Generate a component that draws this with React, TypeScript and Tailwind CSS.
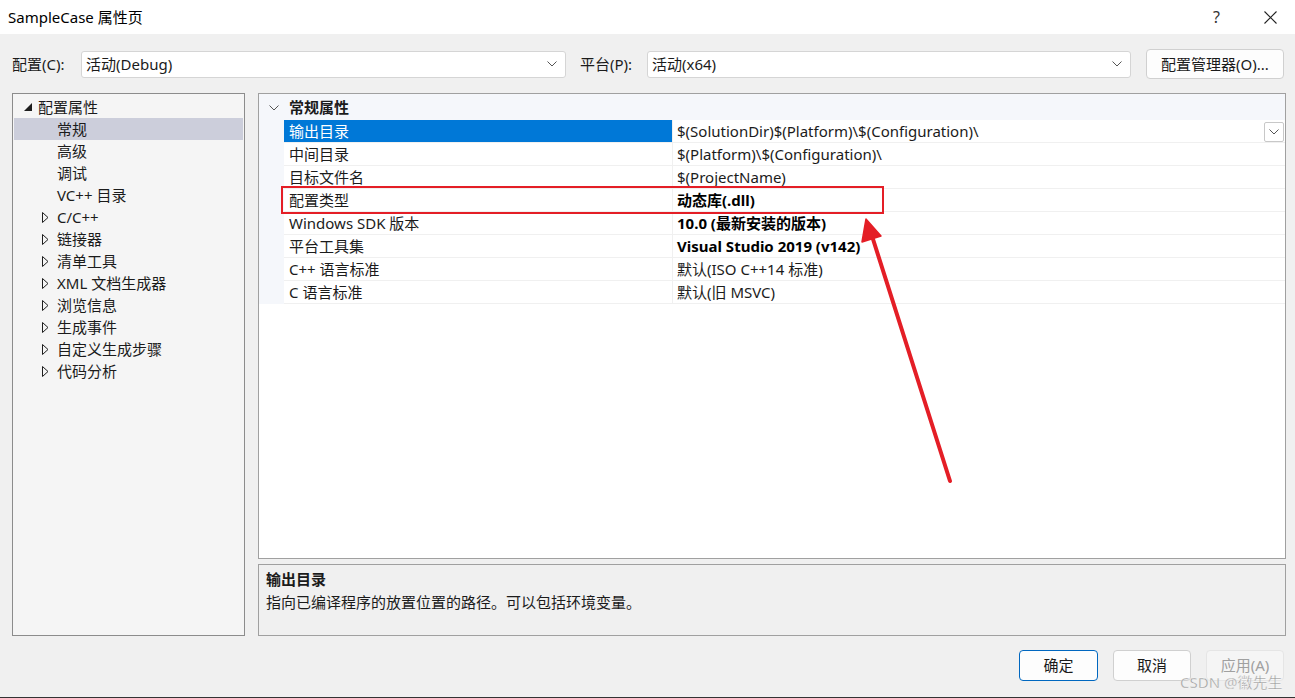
import React from 'react';

const font = { fontFamily: '"Segoe UI", "Noto Sans", "Noto Sans CJK SC", sans-serif' };

const treeItems: { label: string; level: 0 | 1; arrow?: 'open' | 'closed'; selected?: boolean }[] = [
  { label: '配置属性', level: 0, arrow: 'open' },
  { label: '常规', level: 1, selected: true },
  { label: '高级', level: 1 },
  { label: '调试', level: 1 },
  { label: 'VC++ 目录', level: 1 },
  { label: 'C/C++', level: 1, arrow: 'closed' },
  { label: '链接器', level: 1, arrow: 'closed' },
  { label: '清单工具', level: 1, arrow: 'closed' },
  { label: 'XML 文档生成器', level: 1, arrow: 'closed' },
  { label: '浏览信息', level: 1, arrow: 'closed' },
  { label: '生成事件', level: 1, arrow: 'closed' },
  { label: '自定义生成步骤', level: 1, arrow: 'closed' },
  { label: '代码分析', level: 1, arrow: 'closed' },
];

const props: { name: string; value: string; bold?: boolean }[] = [
  { name: '输出目录', value: '$(SolutionDir)$(Platform)\\$(Configuration)\\' },
  { name: '中间目录', value: '$(Platform)\\$(Configuration)\\' },
  { name: '目标文件名', value: '$(ProjectName)' },
  { name: '配置类型', value: '动态库(.dll)', bold: true },
  { name: 'Windows SDK 版本', value: '10.0 (最新安装的版本)', bold: true },
  { name: '平台工具集', value: 'Visual Studio 2019 (v142)', bold: true },
  { name: 'C++ 语言标准', value: '默认(ISO C++14 标准)' },
  { name: 'C 语言标准', value: '默认(旧 MSVC)' },
];

const Chevron: React.FC<{ className?: string }> = ({ className }) => (
  <svg width="10" height="6" viewBox="0 0 10 6" className={className}>
    <path d="M0.5 0.5 L5 5 L9.5 0.5" fill="none" stroke="#555" strokeWidth="1" />
  </svg>
);

const Dropdown: React.FC<{ value: string; width: string }> = ({ value, width }) => (
  <div className={`${width} h-[27px] bg-white border border-[#d5d5d5] rounded-[3px] flex items-center justify-between pl-[4px] pr-[8px]`}>
    <span>{value}</span>
    <Chevron />
  </div>
);

const App: React.FC = () => {
  return (
    <div className="relative w-[1295px] h-[698px] flex flex-col text-[15px] text-[#1b1b1b] border-b border-[#333]" style={font}>
      {/* title bar */}
      <div className="h-[34px] bg-white flex items-center justify-between pl-[8px] pr-[18px]">
        <span className="text-[15px] text-black">SampleCase 属性页</span>
        <div className="flex items-center gap-[44px]">
          <span className="text-[16px] text-[#333]">?</span>
          <svg width="13" height="13" viewBox="0 0 13 13">
            <path d="M0.5 0.5 L12.5 12.5 M12.5 0.5 L0.5 12.5" stroke="#222" strokeWidth="1.1" />
          </svg>
        </div>
      </div>

      <div className="flex-1 bg-[#f0f0f0] flex flex-col">
        {/* config row */}
        <div className="flex items-center pl-[12px] mt-[14px] h-[31px] pt-[1px]">
          <span className="w-[69px]">配置(C):</span>
          <Dropdown value="活动(Debug)" width="w-[485px]" />
          <span className="ml-[14px] w-[67px]">平台(P):</span>
          <Dropdown value="活动(x64)" width="w-[484px]" />
          <button className="ml-[15px] w-[138px] h-[30px] bg-[#fdfdfd] border border-[#d0d0d0] rounded-[4px] text-[15px]">
            配置管理器(O)...
          </button>
        </div>

        {/* main area */}
        <div className="flex mt-[14px] pl-[12px] gap-[13px] h-[543px]">
          {/* tree */}
          <div className="w-[233px] h-full border border-[#8c8c8c] bg-[#f5f5f5] pt-[2px] px-[1px]">
            {treeItems.map((it) => (
              <div
                key={it.label}
                className={`h-[22px] flex items-center ${it.selected ? 'bg-[#cccedb]' : ''}`}
              >
                {it.level === 0 ? (
                  <div className="w-[24px] flex justify-end pr-[6px]">
                    <svg width="8" height="8" viewBox="0 0 8 8">
                      <path d="M8 0 L8 8 L0 8 Z" fill="#1e1e1e" />
                    </svg>
                  </div>
                ) : (
                  <div className="w-[43px] flex justify-end pr-[8px]">
                    {it.arrow === 'closed' && (
                      <svg width="7" height="11" viewBox="0 0 7 11">
                        <path d="M0.5 0.5 L6 5.5 L0.5 10.5 Z" fill="none" stroke="#1e1e1e" strokeWidth="1" />
                      </svg>
                    )}
                  </div>
                )}
                <span>{it.label}</span>
              </div>
            ))}
          </div>

          {/* right side */}
          <div className="w-[1028px] flex flex-col gap-[5px]">
            <div className="h-[466px] border border-[#a0a0a0] bg-white flex flex-col">
              <div className="h-[26px] bg-[#f5f7fb] flex items-center pt-[1px]">
                <div className="w-[30px] flex justify-center">
                  <Chevron />
                </div>
                <span className="font-bold">常规属性</span>
              </div>
              {props.map((p, i) => (
                <div key={p.name} className="h-[23px] flex">
                  <div className="w-[25px] bg-[#f5f7fb]" />
                  <div
                    className={`w-[388px] flex items-center pl-[5px] pt-[1px] border-b border-[#f0f0f0] ${
                      i === 0 ? 'bg-[#0078d7] text-white' : ''
                    }`}
                  >
                    {p.name}
                  </div>
                  <div className="flex-1 flex items-center justify-between pl-[4px] pr-[1px] pt-[1px] border-b border-l border-[#f0f0f0]">
                    <span className={p.bold ? 'font-bold text-black' : ''}>{p.value}</span>
                    {i === 0 && (
                      <div className="w-[20px] h-[20px] border border-[#c8c8c8] rounded-[2px] flex items-center justify-center">
                        <Chevron />
                      </div>
                    )}
                  </div>
                </div>
              ))}
            </div>

            <div className="flex-1 border border-[#a0a0a0] bg-[#f0f0f0] pl-[7px] pt-[3px]">
              <div className="font-bold leading-[22px]">输出目录</div>
              <div className="leading-[24px]">指向已编译程序的放置位置的路径。可以包括环境变量。</div>
            </div>
          </div>
        </div>

        {/* buttons */}
        <div className="flex justify-end pr-[11px] mt-[14px] gap-[15px]">
          <button className="w-[79px] h-[31px] bg-[#fdfdfd] border border-[#0067c0] rounded-[4px]">确定</button>
          <button className="w-[78px] h-[31px] bg-[#fdfdfd] border border-[#d0d0d0] rounded-[4px]">取消</button>
          <button className="w-[78px] h-[31px] bg-[#f5f5f5] border border-[#e5e5e5] rounded-[4px] text-[#a0a0a0]">
            应用(A)
          </button>
        </div>
      </div>

      {/* annotation overlay */}
      <div className="absolute left-[281px] top-[186px] w-[603px] h-[28px] border-2 border-[#e41e26]" />
      <svg className="absolute left-0 top-0 pointer-events-none" width="1295" height="698">
        <line x1="950" y1="481" x2="872" y2="236" stroke="#e41e26" strokeWidth="4" strokeLinecap="round" />
        <path d="M866 219 L862 242 L881 236 Z" fill="#e41e26" stroke="#e41e26" strokeWidth="1.5" strokeLinejoin="round" />
      </svg>
      <span
        className="absolute left-[1180px] top-[671px] text-[15px] text-[#9a9a9a]"
        style={{ WebkitTextStroke: '0.3px #ffffff' }}
      >
        CSDN @徽先生
      </span>
    </div>
  );
};

export default App;
